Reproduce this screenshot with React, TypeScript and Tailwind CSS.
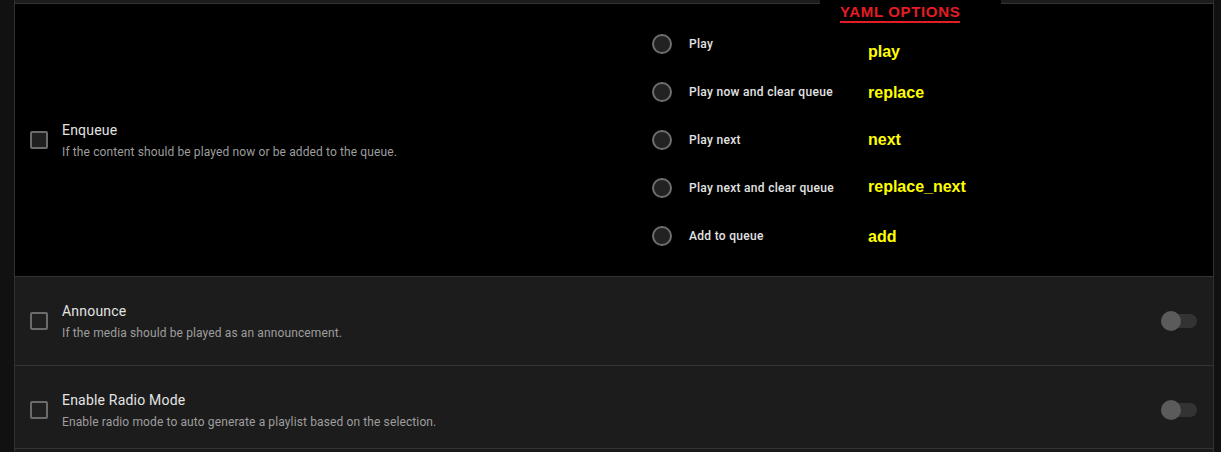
import React from "react";

const font = { fontFamily: "Roboto, 'Liberation Sans', Arial, sans-serif" };

function Checkbox() {
  return <div className="w-[18px] h-[18px] shrink-0 rounded-[2px] border-2 border-[#6b6b6b] bg-[#202020]" />;
}

function Toggle() {
  return (
    <div className="relative w-[36px] h-[20px] shrink-0 flex items-center">
      <div className="w-[36px] h-[14px] rounded-full bg-[#333333]" />
      <div className="absolute left-0 top-0 w-[20px] h-[20px] rounded-full bg-[#5b5b5b]" />
    </div>
  );
}

function TextBlock({ title, desc }: { title: string; desc: string }) {
  return (
    <div className="flex flex-col">
      <div className="text-[14px] leading-[20px] tracking-[0.2px] text-[#e3e3e3]">{title}</div>
      <div className="mt-[4px] text-[12px] leading-[16px] tracking-[0.12px] text-[#9e9e9e]">{desc}</div>
    </div>
  );
}

const radios = ["Play", "Play now and clear queue", "Play next", "Play next and clear queue", "Add to queue"];
const yaml: { t: string; top: string }[] = [
  { t: "play", top: "top-[43px]" },
  { t: "replace", top: "top-[84px]" },
  { t: "next", top: "top-[131px]" },
  { t: "replace_next", top: "top-[178px]" },
  { t: "add", top: "top-[228px]" },
];

export default function App() {
  return (
    <div className="w-[1221px] h-[452px] bg-[#111111] overflow-hidden relative" style={font}>
      <div className="ml-[14px] w-[1200px] border-l border-r border-[#303030] flex flex-col">
        <div className="h-[3px] bg-[#1c1c1c]" />
        <div className="h-[273px] border-t border-[#333333] bg-black flex items-center">
          <div className="w-[637px] shrink-0 flex items-center pl-[15px] gap-[14px]">
            <Checkbox />
            <TextBlock title="Enqueue" desc="If the content should be played now or be added to the queue." />
          </div>
          <div className="flex flex-col">
            {radios.map((r) => (
              <div key={r} className="h-[48px] flex items-center">
                <div className="w-[20px] h-[20px] rounded-full border-2 border-[#6e6e6e] bg-[#222222] shrink-0" />
                <div className="ml-[17px] text-[12px] font-medium tracking-[0.3px] text-[#e3e3e3]">{r}</div>
              </div>
            ))}
          </div>
        </div>
        <div className="h-[89px] border-t border-[#333333] bg-[#1c1c1c] flex items-center pl-[15px] pr-[16px] gap-[14px]">
          <Checkbox />
          <div className="flex-1">
            <TextBlock title="Announce" desc="If the media should be played as an announcement." />
          </div>
          <Toggle />
        </div>
        <div className="h-[84px] border-t border-b border-[#333333] bg-[#1c1c1c] flex items-start pt-[24px] pl-[15px] pr-[16px] gap-[14px]">
          <div className="mt-[11px]"><Checkbox /></div>
          <div className="flex-1">
            <TextBlock title="Enable Radio Mode" desc="Enable radio mode to auto generate a playlist based on the selection." />
          </div>
          <div className="mt-[10px]"><Toggle /></div>
        </div>
        <div className="h-[10px] bg-[#1a1a1a]" />
      </div>

      <div className="absolute left-[820px] top-0 w-[181px] h-[4px] bg-black" />
      <div
        className="absolute left-[840px] top-[3px] text-[15px] leading-[18px] font-bold tracking-[0.65px] text-[#e31c25] border-b-2 border-[#e31c25]"
        style={{ fontFamily: "'Liberation Sans', Arial, sans-serif" }}
      >
        YAML OPTIONS
      </div>
      {yaml.map((y) => (
        <div
          key={y.t}
          className={`absolute left-[868px] ${y.top} text-[16px] leading-[18px] font-bold text-[#ffff00]`}
          style={{ fontFamily: "'Liberation Sans', Arial, sans-serif" }}
        >
          {y.t}
        </div>
      ))}
    </div>
  );
}
